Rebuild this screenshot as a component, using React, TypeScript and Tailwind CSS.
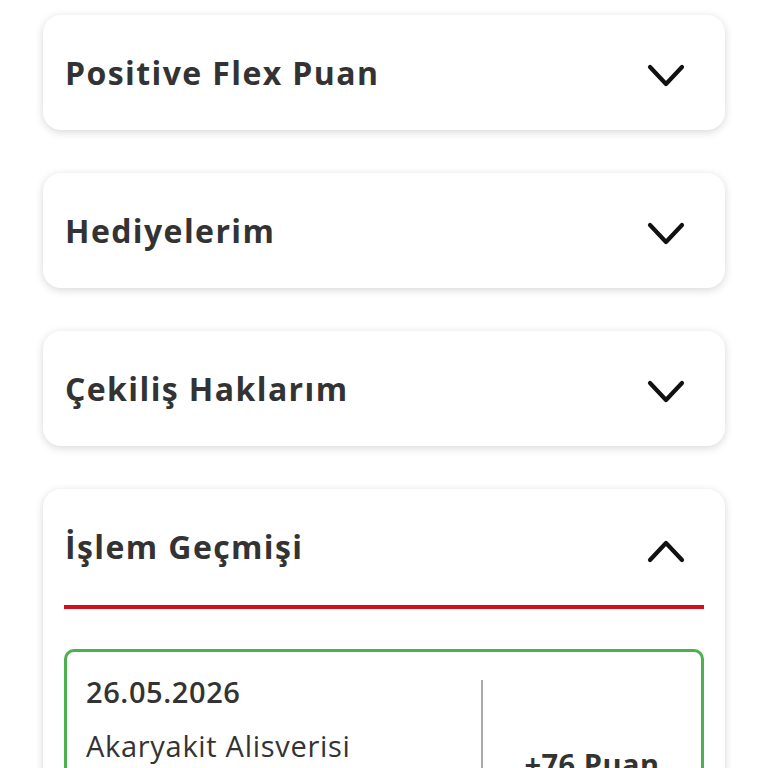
import { useState } from "react";

const sections = ["Positive Flex Puan", "Hediyelerim", "Çekiliş Haklarım"];

function Chevron({ up = false }: { up?: boolean }) {
  return (
    <svg
      width="38"
      height="26"
      viewBox="0 0 38 26"
      fill="none"
      className={up ? "mt-[10px] shrink-0" : "mt-[7px] shrink-0"}
    >
      <path
        d={up ? "M3 21 L19 4 L35 21" : "M3 4 L19 21 L35 4"}
        stroke="#111"
        strokeWidth="4.2"
        strokeLinecap="round"
        strokeLinejoin="round"
      />
    </svg>
  );
}

export default function App() {
  const [open] = useState("İşlem Geçmişi");

  return (
    <div className="min-h-screen bg-white px-[43px] pt-[15px] font-['Open_Sans',sans-serif] text-[#333]">
      <div className="flex flex-col gap-[43px]">
        {sections.map((title) => (
          <div
            key={title}
            className="flex h-[115px] items-center justify-between rounded-[18px] bg-white pl-[22px] pr-[40px] shadow-[0_2px_8px_rgba(0,0,0,0.16)]"
          >
            <span className="text-[32px] font-bold tracking-[1.4px]">{title}</span>
            <Chevron />
          </div>
        ))}

        <div className="rounded-[18px] bg-white px-[21px] shadow-[0_2px_8px_rgba(0,0,0,0.16)]">
          <div className="flex h-[116px] items-center justify-between pl-px pr-[19px]">
            <span className="text-[32px] font-bold tracking-[1.4px]">{open}</span>
            <Chevron up />
          </div>
          <div className="h-[4px] bg-[#d0101c]" />
          <div className="mt-[40px] flex h-[200px] rounded-[10px] border-[3px] border-[#4caf50]">
            <div className="flex w-[414px] flex-col gap-[16px] pl-[19px] pt-[21px]">
              <span className="text-[29px] font-semibold leading-[38px] tracking-[0.6px]">26.05.2026</span>
              <span className="text-[29px] leading-[38px] tracking-[0.7px]">Akaryakit Alisverisi</span>
            </div>
            <div className="mt-[28px] w-[2px] bg-[#aaa]" />
            <div className="flex flex-1 items-start justify-center pt-[90px]">
              <span className="text-[29px] font-bold tracking-[0.5px]">+76 Puan</span>
            </div>
          </div>
          <div className="h-[30px]" />
        </div>
      </div>
    </div>
  );
}
